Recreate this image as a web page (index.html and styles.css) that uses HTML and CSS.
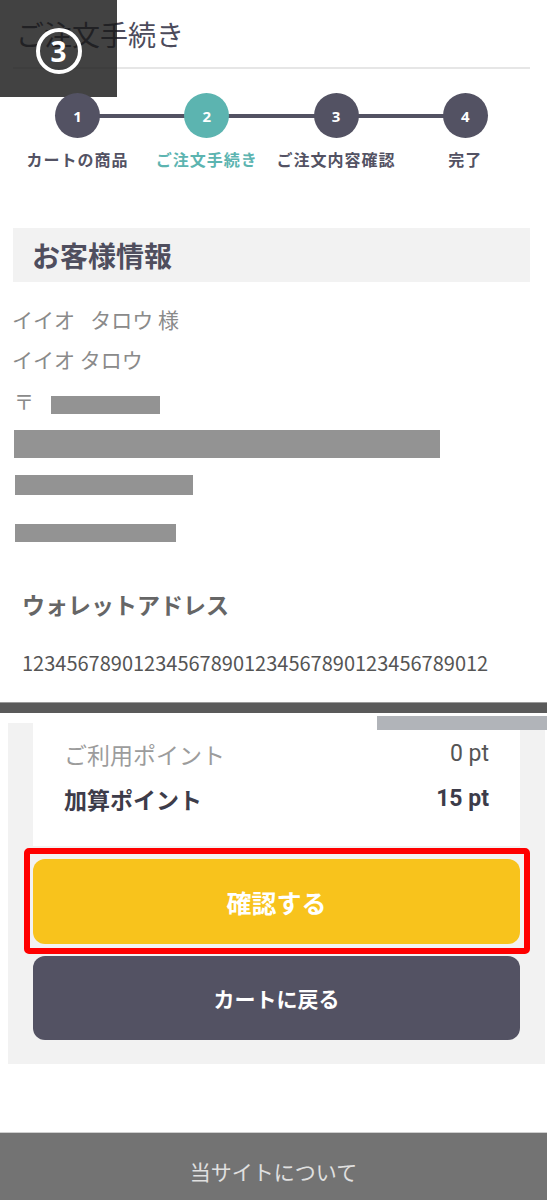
FILE: index.html
```html
<!DOCTYPE html>
<html lang="ja">
<head>
<meta charset="utf-8">
<title>ご注文手続き</title>
<link rel="stylesheet" href="styles.css">
</head>
<body>
<div class="page">
  <header class="top">
    <h1 class="title">ご注文手続き</h1>
    <div class="badge"><span class="badge-num">3</span></div>
  </header>

  <ol class="stepper">
    <li class="step"><span class="step-dot">1</span><span class="step-label">カートの商品</span></li>
    <li class="step is-active"><span class="step-dot">2</span><span class="step-label">ご注文手続き</span></li>
    <li class="step"><span class="step-dot">3</span><span class="step-label">ご注文内容確認</span></li>
    <li class="step"><span class="step-dot">4</span><span class="step-label">完了</span></li>
  </ol>

  <section class="info">
    <h2 class="info-head">お客様情報</h2>
    <p class="plain-line first">イイオ&ensp;&nbsp;タロウ 様</p>
    <p class="plain-line">イイオ タロウ</p>
    <div class="postal"><span class="postal-mark">〒</span><span class="redact redact-zip"></span></div>
    <div class="redact redact-addr1"></div>
    <div class="redact redact-addr2"></div>
    <div class="redact redact-tel"></div>
    <h3 class="wallet-label">ウォレットアドレス</h3>
    <p class="wallet-value">123456789012345678901234567890123456789012</p>
  </section>

  <div class="divider"></div>

  <section class="lower">
    <span class="scroll-bar"></span>
    <div class="panel">
      <div class="points">
        <div class="point-row muted"><span>ご利用ポイント</span><span class="pt">0 pt</span></div>
        <div class="point-row strong"><span>加算ポイント</span><span class="pt">15 pt</span></div>
      </div>
      <div class="confirm-wrap">
        <button class="btn btn-confirm">確認する</button>
        <span class="highlight"></span>
      </div>
      <button class="btn btn-back">カートに戻る</button>
    </div>
  </section>

  <footer class="footer">当サイトについて</footer>
</div>
</body>
</html>
```

FILE: styles.css
```css
* { box-sizing: border-box; }

html, body {
  margin: 0;
  padding: 0;
  background: #fff;
}

body {
  width: 547px;
  font-family: "Noto Sans CJK JP", "Noto Sans", sans-serif;
}

.page {
  position: relative;
  min-height: 1200px;
  display: flex;
  flex-direction: column;
}

/* header */
.top {
  position: relative;
  padding: 18px 17px 0 13px;
}

.title {
  margin: 0;
  padding: 0 0 16px 3px;
  font-size: 28px;
  font-weight: 400;
  line-height: 33px;
  color: #4c4b5b;
  border-bottom: 2px solid #e6e6e6;
}

.badge {
  position: absolute;
  left: 0;
  top: 0;
  width: 117px;
  height: 97px;
  background: rgba(24, 24, 24, 0.82);
  display: flex;
  align-items: center;
  justify-content: center;
  padding-top: 5px;
}

.badge-num {
  width: 46px;
  height: 46px;
  border: 4px solid #fff;
  border-radius: 50%;
  display: flex;
  align-items: center;
  justify-content: center;
  color: #fff;
  font-family: "Noto Sans", "Noto Sans CJK JP", sans-serif;
  font-weight: 700;
  font-size: 28px;
  line-height: 1;
}

/* stepper */
.stepper {
  position: relative;
  list-style: none;
  margin: 24px 17px 0 13px;
  padding: 0;
  display: grid;
  grid-template-columns: repeat(4, 1fr);
}

.stepper::before {
  content: "";
  position: absolute;
  left: 64px;
  right: 64px;
  top: 21px;
  height: 4px;
  background: #535263;
}

.step {
  display: flex;
  flex-direction: column;
  align-items: center;
}

.step-dot {
  position: relative;
  z-index: 1;
  width: 45px;
  height: 45px;
  border-radius: 50%;
  background: #535263;
  color: #fff;
  display: flex;
  align-items: center;
  justify-content: center;
  font-family: "Noto Sans", sans-serif;
  font-weight: 700;
  font-size: 15px;
}

.step-label {
  margin-top: 10px;
  font-size: 16px;
  font-weight: 700;
  line-height: 22px;
  letter-spacing: 1px;
  color: #535263;
  white-space: nowrap;
}

.step.is-active .step-dot { background: #5cb4b0; }
.step.is-active .step-label { color: #5cb4b0; }

/* customer info */
.info {
  margin-top: 58px;
}

.info-head {
  margin: 0 17px 0 13px;
  height: 54px;
  padding-left: 19px;
  background: #f2f2f2;
  font-size: 28px;
  font-weight: 700;
  line-height: 54px;
  color: #4f4e5e;
}

.plain-line {
  margin: 0;
  padding-left: 12px;
  font-size: 21px;
  line-height: 40px;
  color: #8a8a8a;
}

.plain-line.first { margin-top: 17px; }

.postal {
  margin-top: 3px;
  height: 40px;
  display: flex;
  align-items: flex-start;
  padding-left: 14px;
}

.postal-mark {
  font-size: 20px;
  line-height: 40px;
  color: #8a8a8a;
  width: 37px;
}

.redact { background: #939393; display: block; }

.redact-zip {
  margin-top: 14px;
  width: 109px;
  height: 18px;
}

.redact-addr1 {
  margin: 8px 0 0 14px;
  width: 426px;
  height: 28px;
}

.redact-addr2 {
  margin: 17px 0 0 15px;
  width: 178px;
  height: 20px;
}

.redact-tel {
  margin: 29px 0 0 15px;
  width: 161px;
  height: 18px;
}

.wallet-label {
  margin: 46px 0 0 22px;
  font-size: 23px;
  font-weight: 700;
  line-height: 32px;
  color: #666;
}

.wallet-value {
  margin: 28px 0 0 22px;
  font-size: 20px;
  line-height: 30px;
  color: #555;
}

.divider {
  margin-top: 24px;
  height: 11px;
  background: #5a5a5a;
  border-top: 1px solid #9a9a9a;
}

/* lower screenshot part */
.lower {
  position: relative;
  padding-top: 10px;
}

.scroll-bar {
  position: absolute;
  top: 3px;
  left: 377px;
  right: 0;
  height: 14px;
  background: #b1b4b9;
  z-index: 2;
}

.panel {
  margin-left: 8px;
  width: 537px;
  background: #f2f2f2;
  padding: 0 25px 24px;
}

.points {
  background: #fff;
  padding: 8px 31px 25px 31px;
}

.point-row {
  display: flex;
  justify-content: space-between;
  align-items: center;
  height: 45px;
  font-size: 23px;
}

.point-row .pt {
  font-family: Roboto, "Noto Sans", sans-serif;
  font-size: 23px;
}

.point-row.muted { color: #9c9c9c; }
.point-row.muted .pt { color: #555; }

.point-row.strong {
  color: #3d3c4a;
  font-weight: 700;
}

.confirm-wrap {
  position: relative;
  margin-top: 13px;
}

.btn {
  display: block;
  width: 100%;
  border: 0;
  border-radius: 12px;
  color: #fff;
  font-family: "Noto Sans CJK JP", sans-serif;
  font-weight: 700;
  cursor: pointer;
}

.btn-confirm {
  height: 85px;
  background: #f8c31c;
  font-size: 25px;
}

.highlight {
  position: absolute;
  top: -11px;
  left: -9px;
  right: -10px;
  bottom: -10px;
  border: 6px solid #ff0000;
  border-radius: 5px;
  pointer-events: none;
}

.btn-back {
  margin-top: 12px;
  height: 84px;
  background: #535263;
  font-size: 21px;
}

.footer {
  margin-top: 68px;
  flex: 1;
  border-top: 1px solid #cfcfcf;
  background: #737373;
  padding-top: 23px;
  text-align: center;
  font-size: 21px;
  line-height: 30px;
  color: #e0e0e0;
}
```
